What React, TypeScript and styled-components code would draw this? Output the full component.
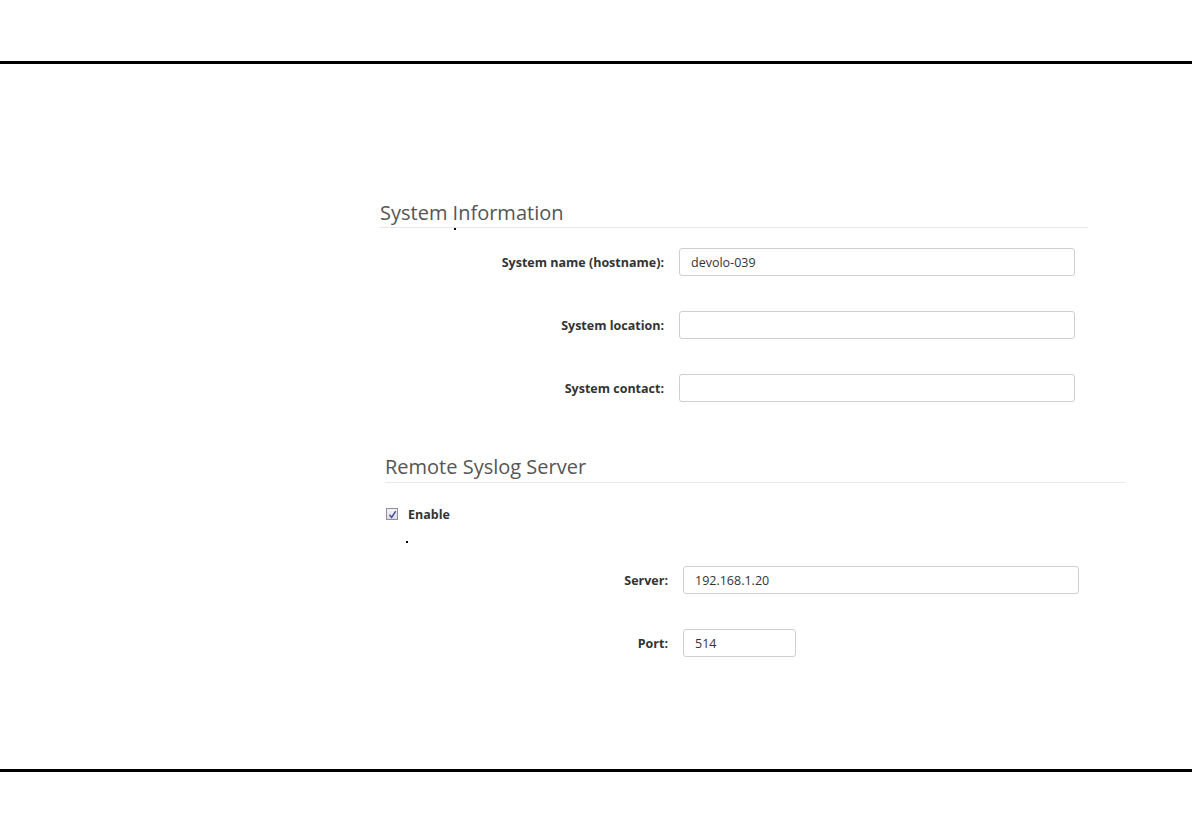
import React from "react";
import styled, { createGlobalStyle } from "styled-components";

const GlobalStyle = createGlobalStyle`
  html, body {
    margin: 0;
    padding: 0;
    background: #ffffff;
    font-family: "Open Sans", "Liberation Sans", sans-serif;
    color: #333;
  }
`;

const Page = styled.div`
  width: 1192px;
  height: 838px;
  display: flex;
  flex-direction: column;
  overflow: hidden;
`;

const TopBar = styled.div`
  height: 61px;
  border-bottom: 3px solid #000;
  flex-shrink: 0;
`;

const Main = styled.div`
  height: 705px;
  border-bottom: 3px solid #000;
  flex-shrink: 0;
  display: flex;
  flex-direction: column;
`;

const Section = styled.section<{ $left: number; $width: number; $top: number }>`
  margin-left: ${(p) => p.$left}px;
  margin-top: ${(p) => p.$top}px;
  width: ${(p) => p.$width}px;
`;

const SectionTitle = styled.h2<{ $pad: number }>`
  margin: 0;
  font-size: 20px;
  font-weight: 400;
  line-height: 27px;
  padding-bottom: ${(p) => p.$pad}px;
  color: #555;
  border-bottom: 1px solid #e8e8e8;
  position: relative;
`;

const Speck = styled.span<{ $x: number; $y: number }>`
  position: absolute;
  left: ${(p) => p.$x}px;
  top: ${(p) => p.$y}px;
  width: 2px;
  height: 2px;
  background: #000;
`;

const Rows = styled.div<{ $top: number }>`
  display: flex;
  flex-direction: column;
  gap: 35px;
  margin-top: ${(p) => p.$top}px;
`;

const Row = styled.div`
  display: flex;
  align-items: center;
  height: 28px;
`;

const Label = styled.label<{ $width: number }>`
  width: ${(p) => p.$width}px;
  flex-shrink: 0;
  text-align: right;
  font-size: 12.5px;
  font-weight: 700;
  color: #333;
  padding-right: 15px;
  box-sizing: border-box;
`;

const Input = styled.input<{ $width: number }>`
  width: ${(p) => p.$width}px;
  height: 28px;
  box-sizing: border-box;
  border: 1px solid #cfcfcf;
  border-radius: 3px;
  padding: 0 11px;
  font-family: "Open Sans", "Liberation Sans", sans-serif;
  font-size: 12.5px;
  color: #333;
  background: #fff;
  outline: none;
`;

const CheckRow = styled.div`
  display: flex;
  align-items: center;
  gap: 10px;
  margin-top: 24px;
  padding-left: 1px;
  height: 14px;
  position: relative;
`;

const CheckBox = styled.span`
  width: 12px;
  height: 12px;
  box-sizing: border-box;
  border: 1px solid #8f8f9a;
  background: linear-gradient(#f4f4f8, #dcdce6);
  display: flex;
  align-items: center;
  justify-content: center;
`;

const CheckLabel = styled.span`
  font-size: 12.5px;
  font-weight: 700;
  color: #333;
`;

export default function App() {
  return (
    <>
      <GlobalStyle />
      <Page>
        <TopBar />
        <Main>
          <Section $left={380} $width={708} $top={135}>
            <SectionTitle $pad={1}>
              System Information
              <Speck $x={74} $y={29} />
            </SectionTitle>
            <Rows $top={20}>
              <Row>
                <Label $width={299}>System name (hostname):</Label>
                <Input $width={396} defaultValue="devolo-039" />
              </Row>
              <Row>
                <Label $width={299}>System location:</Label>
                <Input $width={396} defaultValue="" />
              </Row>
              <Row>
                <Label $width={299}>System contact:</Label>
                <Input $width={396} defaultValue="" />
              </Row>
            </Rows>
          </Section>
          <Section $left={385} $width={740} $top={51}>
            <SectionTitle $pad={2}>Remote Syslog Server</SectionTitle>
            <CheckRow>
              <CheckBox>
                <svg width="9" height="9" viewBox="0 0 9 9">
                  <path d="M1.5 4.8 L3.6 7.5 L7.8 1.2" fill="none" stroke="#4b4b9e" strokeWidth="1.5" />
                </svg>
              </CheckBox>
              <CheckLabel>Enable</CheckLabel>
              <Speck $x={21} $y={34} />
            </CheckRow>
            <Rows $top={45}>
              <Row>
                <Label $width={298}>Server:</Label>
                <Input $width={396} defaultValue="192.168.1.20" />
              </Row>
              <Row>
                <Label $width={298}>Port:</Label>
                <Input $width={113} defaultValue="514" />
              </Row>
            </Rows>
          </Section>
        </Main>
      </Page>
    </>
  );
}
